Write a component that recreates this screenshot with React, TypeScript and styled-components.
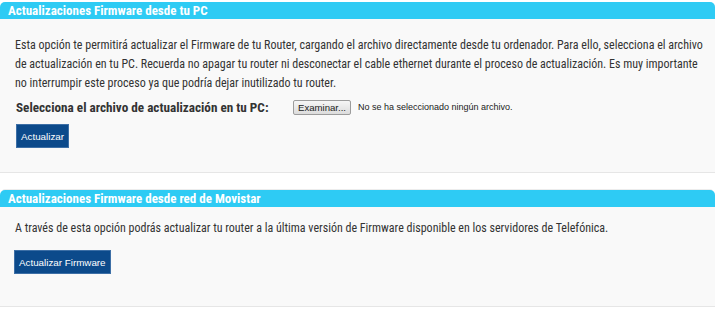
import React from 'react';
import styled, { createGlobalStyle } from 'styled-components';

const GlobalStyle = createGlobalStyle`
  html, body {
    margin: 0;
    padding: 0;
    background: #ffffff;
  }
`;

const Page = styled.div`
  width: 715px;
  padding-top: 2px;
  font-family: "Liberation Sans Narrow", "Roboto Condensed", "DejaVu Sans Condensed", "Liberation Sans", sans-serif;
  color: #333333;
`;

const Panel = styled.section<{ $topLine?: boolean }>`
  background: #f9f9f9;
  border-radius: 5px 5px 0 0;
  border-bottom: 1px solid #e6e6e6;
  margin-bottom: 17px;
  ${p => p.$topLine ? 'box-shadow: 0 -3px 0 -2px #ececec;' : ''}
`;

const Header = styled.h2`
  margin: 0;
  height: 17px;
  line-height: 17px;
  padding-left: 8px;
  background: #2ecbf4;
  border-radius: 5px 5px 0 0;
  color: #ffffff;
  font-size: 13px;
  font-weight: bold;
`;

const Body = styled.div<{ $top: number; $bottom: number }>`
  padding: ${p => p.$top}px 10px ${p => p.$bottom}px 15px;
`;

const Text = styled.p`
  margin: 0;
  font-size: 12px;
  line-height: 19px;
`;

const FileRow = styled.div`
  display: flex;
  align-items: center;
  height: 20px;
  margin-top: 4px;
  padding-left: 1px;
`;

const Label = styled.label`
  font-size: 13.2px;
  font-weight: bold;
  width: 277px;
`;

const BrowseButton = styled.button`
  height: 15px;
  padding: 0 4px;
  font-family: "Liberation Sans", sans-serif;
  font-size: 9.6px;
  line-height: 13px;
  color: #222;
  background: linear-gradient(#f6f6f6, #dcdcdc);
  border: 1px solid #9c9c9c;
  border-radius: 2px;
`;

const NoFile = styled.span`
  margin-left: 7px;
  font-family: "Liberation Sans", sans-serif;
  font-size: 9px;
  color: #222;
`;

const ActionButton = styled.button<{ $top: number; $left: number }>`
  display: block;
  margin: ${p => p.$top}px 0 0 ${p => p.$left}px;
  height: 24px;
  padding: 0 4px;
  background: #0c4a8b;
  border: 1px solid #3d6fa6;
  color: #ffffff;
  font-family: "Liberation Sans", sans-serif;
  font-size: 9.8px;
`;

export default function App() {
  return (
    <Page>
      <GlobalStyle />
      <Panel>
        <Header>Actualizaciones Firmware desde tu PC</Header>
        <Body $top={17} $bottom={24}>
          <Text>
            Esta opción te permitirá actualizar el Firmware de tu Router, cargando el archivo directamente desde tu ordenador. Para ello, selecciona el archivo de actualización en tu PC. Recuerda no apagar tu router ni desconectar el cable ethernet durante el proceso de actualización. Es muy importante no interrumpir este proceso ya que podría dejar inutilizado tu router.
          </Text>
          <FileRow>
            <Label>Selecciona el archivo de actualización en tu PC:</Label>
            <BrowseButton>Examinar...</BrowseButton>
            <NoFile>No se ha seleccionado ningún archivo.</NoFile>
          </FileRow>
          <ActionButton $top={7} $left={1}>Actualizar</ActionButton>
        </Body>
      </Panel>
      <Panel $topLine>
        <Header>Actualizaciones Firmware desde red de Movistar</Header>
        <Body $top={12} $bottom={32}>
          <Text>
            A través de esta opción podrás actualizar tu router a la última versión de Firmware disponible en los servidores de Telefónica.
          </Text>
          <ActionButton $top={12} $left={-1}>Actualizar Firmware</ActionButton>
        </Body>
      </Panel>
    </Page>
  );
}
